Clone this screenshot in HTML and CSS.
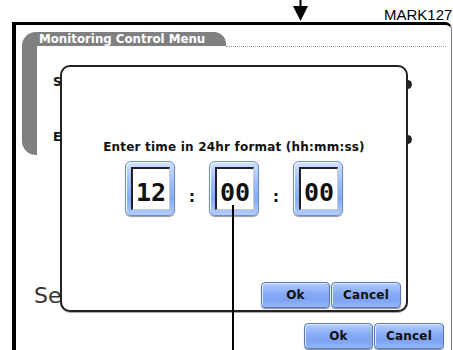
FILE: index.html
```html
<!DOCTYPE html>
<html lang="en">
<head>
    <meta charset="UTF-8">
    <title>Monitoring Control Menu - Set Time</title>
    <link rel="stylesheet" href="styles.css">
</head>
<body>

    <div class="mark">MARK127</div>
    <svg class="arrow" width="17" height="22" viewBox="0 0 17 22">
        <rect x="7.5" y="0" width="2" height="8" fill="#000"/>
        <polygon points="1,6 16,6 8.5,21" fill="#000"/>
    </svg>

    <div class="screen">
        <div class="panel-head">
            <div class="tab">Monitoring Control Menu</div>
            <div class="rule"></div>
        </div>

        <div class="panel-body">
            <div class="side"></div>
            <div class="rows">
                <div class="row">
                    <span class="label">S</span>
                    <span class="toggle"></span>
                </div>
                <div class="row">
                    <span class="label">E</span>
                    <span class="toggle"></span>
                </div>
            </div>
        </div>

        <div class="set-label">Se</div>

        <div class="actions screen-actions">
            <button class="btn btn-ok">Ok</button>
            <button class="btn btn-cancel">Cancel</button>
        </div>

        <div class="dialog">
            <p class="prompt">Enter time in 24hr format (hh:mm:ss)</p>
            <div class="fields">
                <div class="field"><div class="digits">12</div></div>
                <span class="sep">:</span>
                <div class="field"><div class="digits">00</div></div>
                <span class="sep">:</span>
                <div class="field"><div class="digits">00</div></div>
            </div>
            <div class="actions dialog-actions">
                <button class="btn btn-ok">Ok</button>
                <button class="btn btn-cancel">Cancel</button>
            </div>
        </div>
    </div>

    <div class="callout"></div>

</body>
</html>
```

FILE: styles.css
```css
body {
    margin: 0;
    width: 453px;
    height: 350px;
    overflow: hidden;
    position: relative;
    background: #fff;
    font-family: 'DejaVu Sans', sans-serif;
    color: #111;
}

/* annotation marks around the screen */
.mark {
    position: absolute;
    left: 384px;
    top: 7px;
    font-family: 'Liberation Sans', Arial, sans-serif;
    font-size: 15px;
    line-height: 15px;
    color: #000;
    white-space: nowrap;
}

.arrow {
    position: absolute;
    left: 292px;
    top: 0;
}

.callout {
    position: absolute;
    left: 232px;
    top: 205px;
    width: 2px;
    height: 150px;
    background: #000;
}

/* device screen */
.screen {
    position: relative;
    box-sizing: border-box;
    margin: 22px 0 0 12px;
    width: 440px;
    height: 340px;
    padding: 7px 0 0 6px;
    border-top: 3px solid #000;
    border-left: 4px solid #000;
    border-right: 1px solid #777;
    border-top-right-radius: 7px;
}

.panel-head {
    display: flex;
    height: 14px;
}

.tab {
    width: 204px;
    height: 14px;
    box-sizing: border-box;
    padding-left: 17px;
    background: #808080;
    border-radius: 14px 12px 0 0;
    color: #fff;
    font-weight: bold;
    font-size: 11.8px;
    line-height: 14px;
    white-space: nowrap;
}

.rule {
    flex: 1;
    height: 14px;
    margin-right: 5px;
    border-bottom: 1px dotted #999;
}

.panel-body {
    display: flex;
    align-items: flex-start;
}

.side {
    width: 15px;
    height: 109px;
    background: #808080;
    border-bottom-left-radius: 14px;
}

.rows {
    padding-top: 29px;
}

.row {
    display: flex;
    justify-content: space-between;
    align-items: flex-start;
    width: 359px;
    height: 55px;
    margin-left: 16px;
}

.label {
    font-weight: bold;
    font-size: 12px;
    line-height: 14px;
    color: #111;
}

.toggle {
    width: 20px;
    height: 9px;
    margin-top: 5px;
    border-radius: 5px;
    background: #222;
}

.set-label {
    margin: 98px 0 0 12px;
    font-size: 22px;
    line-height: 26px;
    color: #333;
}

.actions {
    display: flex;
    justify-content: flex-end;
}

.screen-actions {
    margin: 14px 7px 0 0;
}

.btn {
    box-sizing: border-box;
    width: 70px;
    height: 26px;
    padding: 0;
    border: 1px solid #5b79b6;
    border-radius: 4px;
    background: linear-gradient(#b4cdff, #86aaf7 45%, #7ea3f4 70%, #94b6fb);
    box-shadow: inset 1px 1px 0 #dfe9ff, 0 1px 1px #8a8a8a;
    font-family: 'DejaVu Sans', sans-serif;
    font-weight: bold;
    font-size: 12px;
    letter-spacing: 0.2px;
    color: #111;
}

.btn-ok {
    width: 69px;
}

.btn-cancel {
    margin-left: 1px;
}

/* modal time dialog */
.dialog {
    position: absolute;
    left: 44px;
    top: 40px;
    box-sizing: border-box;
    width: 348px;
    height: 247px;
    border: 2px solid #222;
    border-radius: 10px;
    background: #fff;
    box-shadow: 0 1px 0 #aaa;
    display: flex;
    flex-direction: column;
}

.prompt {
    margin: 73px 0 0;
    text-align: center;
    font-weight: bold;
    font-size: 12px;
    letter-spacing: 0.2px;
    line-height: 14px;
    white-space: nowrap;
}

.fields {
    display: flex;
    justify-content: center;
    margin-top: 7px;
}

.field {
    box-sizing: border-box;
    width: 50px;
    height: 55px;
    padding: 5px 4px 5px 5px;
    border: 1px solid #6a8cd0;
    border-radius: 6px;
    background: linear-gradient(#d2e1ff, #9dbdfa 40%, #86abf5 70%, #b4cdfd);
    box-shadow: inset 1px 1px 0 #f4f8ff, 0 1px 1px #999;
}

.digits {
    box-sizing: border-box;
    height: 43px;
    padding-top: 7px;
    border-top: 2px solid #222;
    border-left: 2px solid #222;
    border-right: 1px solid #c8c8d0;
    border-bottom: 1px solid #c8c8d0;
    background: #fff;
    font-family: 'DejaVu Sans Mono', monospace;
    font-weight: bold;
    font-size: 25px;
    line-height: 34px;
    text-align: center;
    color: #111;
}

.sep {
    display: flex;
    align-items: flex-end;
    justify-content: center;
    width: 34px;
    height: 55px;
    box-sizing: border-box;
    padding-bottom: 11px;
    font-weight: bold;
    font-size: 16px;
    line-height: 16px;
}

.dialog-actions {
    margin: auto 5px 2px 0;
}
```
